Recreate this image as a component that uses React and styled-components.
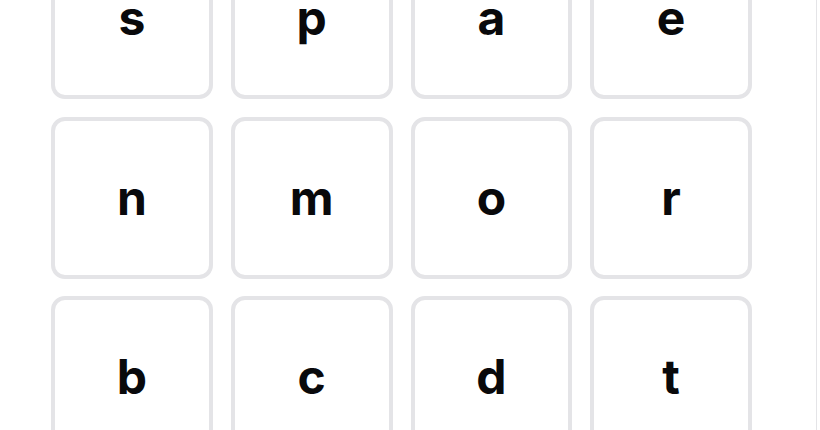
import styled, { createGlobalStyle } from "styled-components"

const GlobalStyle = createGlobalStyle`
  html, body {
    margin: 0;
    padding: 0;
    background: #ffffff;
    overflow: hidden;
  }
  body {
    font-family: Inter, "Liberation Sans", sans-serif;
    color: #09090b;
  }
`

const Page = styled.div`
  display: flex;
  width: 820px;
  height: 430px;
  overflow: hidden;
`

const Main = styled.main`
  width: 817px;
  flex: none;
  border-right: 1px solid #e4e4e7;
  box-sizing: border-box;
  padding-left: 51px;
`

const Board = styled.div`
  width: 701px;
  margin-top: -62.5px;
  display: grid;
  grid-template-columns: repeat(4, 1fr);
  gap: 17.5px 18px;
`

const Tile = styled.button`
  aspect-ratio: 1 / 1;
  box-sizing: border-box;
  display: flex;
  align-items: center;
  justify-content: center;
  padding: 0;
  background: #ffffff;
  border: 4px solid #e4e4e7;
  border-radius: 14px;
  font-family: Inter, "Liberation Sans", sans-serif;
  font-size: 48px;
  font-weight: 700;
  line-height: 1;
  color: #09090b;
  cursor: pointer;
`

const letters = ["s", "p", "a", "e", "n", "m", "o", "r", "b", "c", "d", "t"]

export default function App() {
  return (
    <>
      <GlobalStyle />
      <Page>
        <Main>
          <Board>
            {letters.map((l) => (
              <Tile key={l}>{l}</Tile>
            ))}
          </Board>
        </Main>
      </Page>
    </>
  )
}
